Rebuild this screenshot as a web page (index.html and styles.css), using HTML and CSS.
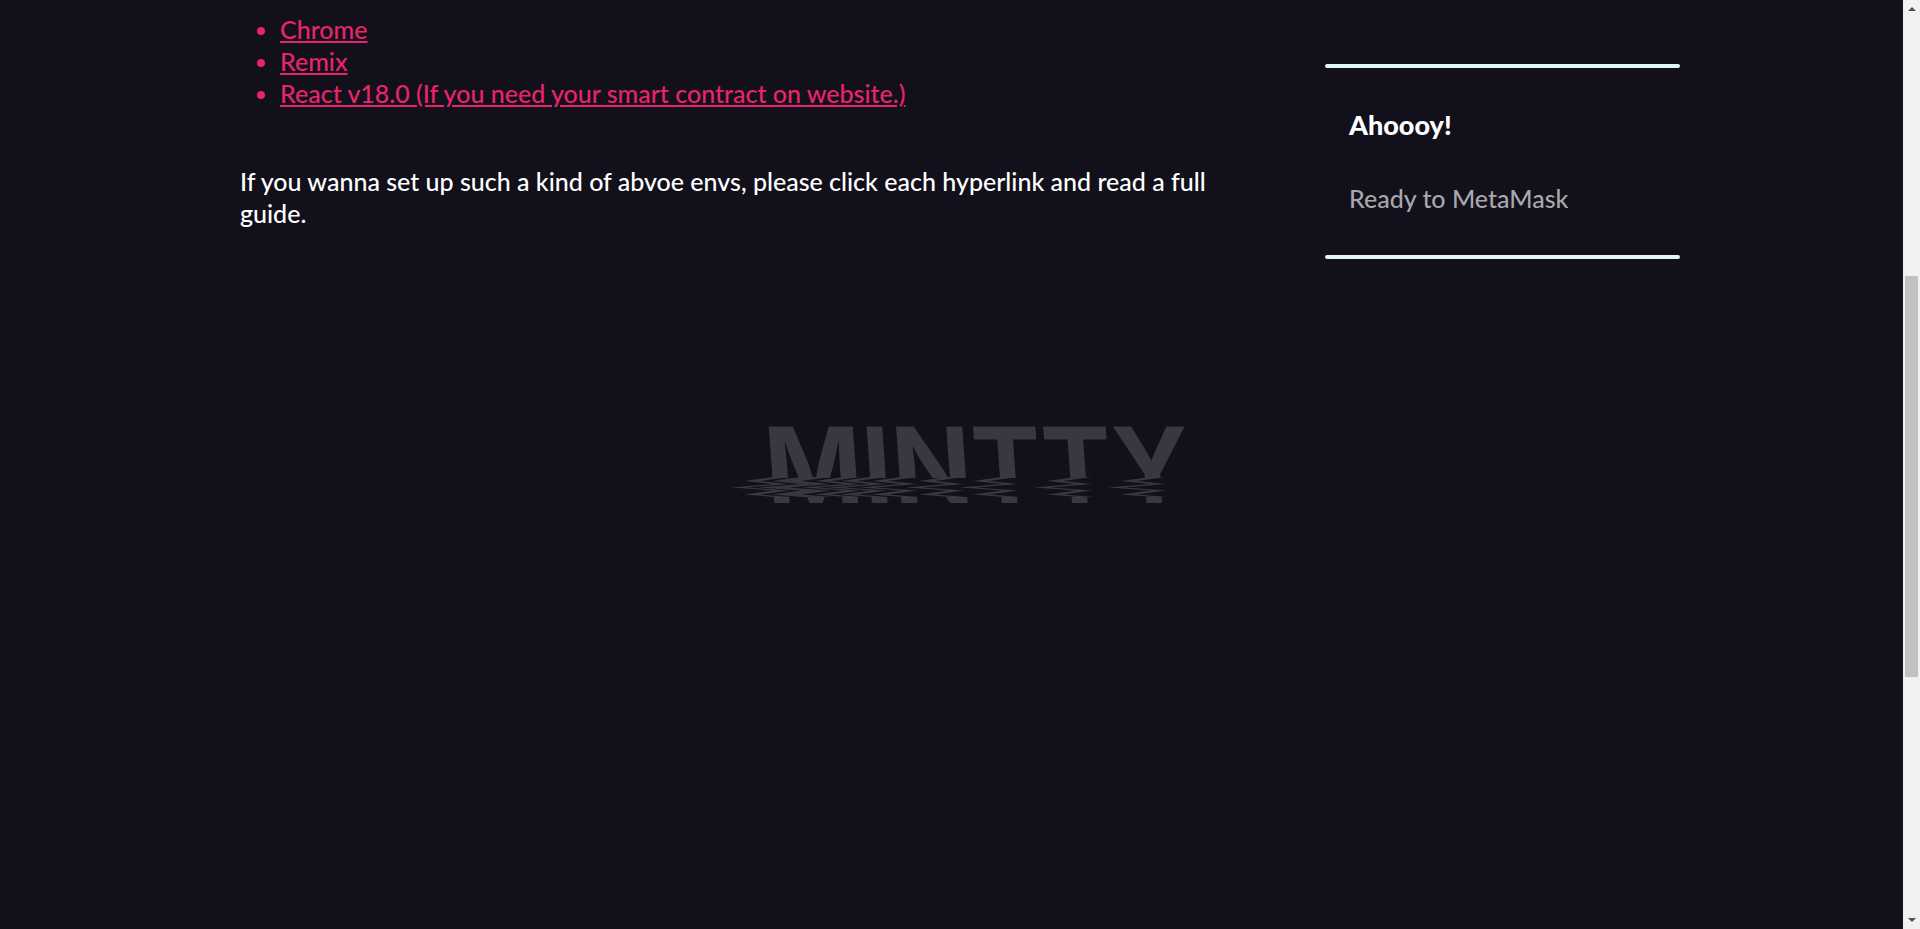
FILE: index.html
```
<!DOCTYPE html>
<html lang="en">
<head>
    <meta charset="UTF-8">
    <meta name="viewport" content="width=device-width, initial-scale=1.0">
    <title>Mintty</title>
    <link rel="stylesheet" href="styles.css">
</head>
<body>

<div class="page">
  <main class="content">
    <article class="guide">
      <ul class="env-list">
        <li><a href="#chrome">Chrome</a></li>
        <li><a href="#remix">Remix</a></li>
        <li><a href="#react">React v18.0 (If you need your smart contract on website.)</a></li>
      </ul>
      <p class="guide-text">If you wanna set up such a kind of abvoe envs, please click each hyperlink and read a full guide.</p>
    </article>

    <aside class="wallet">
      <h2 class="wallet-title">Ahoooy!</h2>
      <p class="wallet-status">Ready to MetaMask</p>
    </aside>
  </main>

  <footer class="footer">
    <svg class="logo" viewBox="0 0 460 78" role="img" aria-label="MINTTY">
      <defs>
        <polygon id="wave" points="0,0 -29,4 0,7 -42,10.5 0,13.5 -29,17.5 2,20 18,20 -13,17.5 16,13.5 -26,10.5 16,7 -13,4 16,0"/>
      </defs>
      <text class="logo-text" x="32" y="76" transform="skewX(4)">MINTTY</text>
      <rect class="logo-gap" x="0" y="51" width="460" height="19"/>
      <!-- ripples, one under each stroke -->
      <use href="#wave" x="43" y="50"/>
      <use href="#wave" x="71" y="50"/>
      <use href="#wave" x="84" y="50"/>
      <use href="#wave" x="114" y="50"/>
      <use href="#wave" x="140" y="50"/>
      <use href="#wave" x="171" y="50"/>
      <use href="#wave" x="218" y="50"/>
      <use href="#wave" x="272" y="50"/>
      <use href="#wave" x="346" y="50"/>
      <use href="#wave" x="420" y="50"/>
    </svg>
  </footer>
</div>

<div class="scrollbar" aria-hidden="true">
  <span class="arrow up"></span>
  <div class="track"><div class="thumb"></div></div>
  <span class="arrow down"></span>
</div>

</body>
</html>
```
FILE: styles.css
```
* {
    box-sizing: border-box;
}

body {
    margin: 0;
    height: 100vh;
    overflow: hidden;
    background-color: #12101b;
    color: #fff;
    font-family: Lato, sans-serif;
    font-size: 25px;
    font-weight: 500;
    line-height: 32px;
}

.content {
    display: grid;
    grid-template-columns: minmax(0, 1fr) 355px;
    gap: 96px;
    align-items: start;
    padding: 0 12.5vw;
}

.env-list {
    margin: 0;
    padding: 13px 0 0 40px;
    color: #e9246a;
}

.env-list a {
    color: inherit;
}

.guide-text {
    margin: 56px 0 0;
}

.wallet {
    margin-top: 64px;
    padding: 45px 24px 43px;
    position: relative;
}

.wallet::before,
.wallet::after {
    content: "";
    position: absolute;
    left: 0;
    right: 0;
    height: 4px;
    border-radius: 2px;
    background-color: #e0f7fa;
}

.wallet::before {
    top: 0;
}

.wallet::after {
    bottom: 0;
}

.wallet-title {
    margin: 0 0 40px;
    font-size: 27px;
    line-height: 32px;
    font-weight: 900;
}

.wallet-status {
    margin: 0;
    line-height: 35px;
    color: #a8a7ac;
}

.footer {
    display: flex;
    justify-content: center;
    margin-top: 168px;
}

.logo {
    width: 460px;
    height: 78px;
    overflow: visible;
    fill: #3a3742;
}

.logo-text {
    font-family: Inter, sans-serif;
    font-size: 105px;
    font-weight: 700;
}

.logo-gap {
    fill: #12101b;
}

/* scrollbar */

.scrollbar {
    position: fixed;
    top: 0;
    right: 0;
    bottom: 0;
    width: 17px;
    display: flex;
    flex-direction: column;
    align-items: center;
    justify-content: space-between;
    padding: 7px 0;
    background-color: #f1f1f1;
}

.track {
    flex: 1;
    width: 13px;
}

.thumb {
    height: 401px;
    margin-top: 265px;
    background-color: #c1c1c1;
}

.arrow {
    border: 4px solid transparent;
}

.up {
    border-top: 0;
    border-bottom-color: #505050;
}

.down {
    border-bottom: 0;
    border-top-color: #505050;
}
```
